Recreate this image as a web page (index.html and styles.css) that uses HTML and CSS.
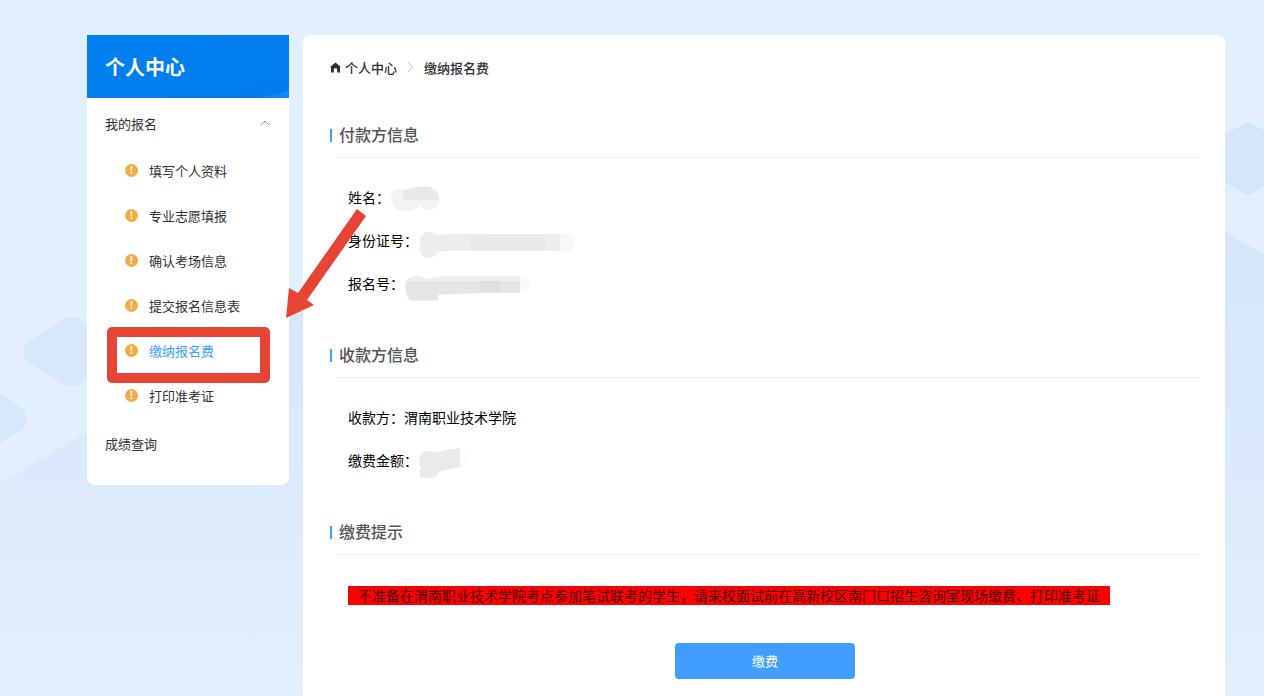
FILE: index.html
```html
<!DOCTYPE html>
<html lang="zh-CN">
<head>
  <meta charset="UTF-8">
  <meta name="viewport" content="width=device-width, initial-scale=1.0">
  <title>个人中心 - 缴纳报名费</title>
  <link rel="stylesheet" href="styles.css">
</head>
<body>
  <!-- 背景 -->
  <svg class="backdrop" viewBox="0 0 1264 696" preserveAspectRatio="xMidYMid slice" aria-hidden="true">
    <defs>
      <linearGradient id="fade" x1="0" y1="0" x2="0" y2="1">
        <stop offset="0" stop-color="#d5e6fb"/>
        <stop offset="0.5" stop-color="#dce9fc"/>
        <stop offset="1" stop-color="#e2effe"/>
      </linearGradient>
    </defs>
    <path fill="url(#fade)" d="M0 483 L90 430 L310 300 L1200 220 L1225 232 L1264 254 V696 H0 Z"/>
    <path fill="#d7e7fc" d="M26 343 L66 318 Q72 315 78 318 L118 343 V360 L78 385 Q72 388 66 385 L26 361 Q20 352 26 343 Z"/>
    <path fill="#d7e7fc" d="M0 394 L22 408 Q26 411 26 416 V422 Q26 426 22 429 L0 443 Z"/>
    <path fill="#d3e6fa" d="M1216 140 L1243 124 Q1248 121 1253 124 L1280 140 V177 L1253 193 Q1248 196 1243 193 L1216 177 Z"/>
  </svg>

  <div class="page">
    <!-- 左侧菜单 -->
    <aside class="sidebar">
      <h1 class="sidebar-title">个人中心</h1>
      <nav class="menu">
        <button type="button" class="menu-row" aria-expanded="true">
          我的报名
          <svg width="10" height="6" viewBox="0 0 10 6"><path d="M1 5 L5 1 L9 5" fill="none" stroke="#999" stroke-width="1"/></svg>
        </button>
        <ul class="submenu">
          <li><a href="#"><i class="warn">!</i>填写个人资料</a></li>
          <li><a href="#"><i class="warn">!</i>专业志愿填报</a></li>
          <li><a href="#"><i class="warn">!</i>确认考场信息</a></li>
          <li><a href="#"><i class="warn">!</i>提交报名信息表</a></li>
          <li class="marked"><a href="#" class="active"><i class="warn">!</i>缴纳报名费</a></li>
          <li><a href="#"><i class="warn">!</i>打印准考证</a></li>
        </ul>
        <a href="#" class="menu-row">成绩查询</a>
      </nav>
      <svg class="arrow" width="82" height="110" viewBox="0 0 82 110" aria-hidden="true">
        <path fill="#e64535" d="M72 0 L81 7 L22 91 L29 96 L1 109 L4 79 L13 84 Z"/>
      </svg>
    </aside>

    <!-- 缴费内容 -->
    <main class="content">
      <div class="breadcrumb">
        <svg width="11" height="11" viewBox="0 0 11 11"><path fill="#303133" d="M5.5 0.5 L11 5 H10 V10.5 H7.2 V7.5 Q7.2 6.3 5.5 6.3 Q3.8 6.3 3.8 7.5 V10.5 H1 V5 H0 Z"/></svg>
        <a href="#">个人中心</a>
        <svg class="sep" width="7" height="12" viewBox="0 0 7 12"><path d="M1 1 L6 6 L1 11" fill="none" stroke="#c0c4cc"/></svg>
        <span>缴纳报名费</span>
      </div>

      <section class="block">
        <h2 class="block-title"><span>付款方信息</span></h2>
        <div class="field">姓名：
          <svg width="54" height="30" viewBox="0 0 54 30">
            <path fill="#f3f3f3" d="M1 11 Q2 3 10 4 Q15 4 17 6 Q28 0 40 2 Q50 5 50 14 Q48 26 38 25 Q32 24 29 20 Q24 28 14 26 Q3 25 4 19 Q0 17 1 11 Z"/>
            <path fill="#e8e8e8" d="M13 6 Q28 0 40 2 Q48 5 49 15 H13 Z"/>
          </svg>
        </div>
        <div class="field">身份证号：
          <svg width="160" height="30" viewBox="0 0 160 30">
            <path fill="#f8f8f8" d="M136 6 H152 Q158 7 157 15 Q158 22 150 23 H136 Z"/>
            <path fill="#ededed" d="M2 13 Q3 4 11 4 Q16 4 19 7 Q40 5 70 6 H142 V23 H50 Q30 22 20 24 Q16 31 9 30 Q1 28 2 20 Z"/>
            <path fill="#e9e9e9" d="M52 7 H128 V22 H52 Z"/>
          </svg>
        </div>
        <div class="field">报名号：
          <svg width="132" height="30" viewBox="0 0 132 30">
            <path fill="#fafafa" d="M110 6 H121 Q128 9 126 16 Q124 21 110 22 Z"/>
            <path fill="#eeeeee" d="M1 15 Q2 6 11 5 Q18 5 22 8 Q40 4 60 5 H116 V22 H80 L34 24 V30 H6 Q1 26 1 15 Z"/>
            <path fill="#e6e6e6" d="M2 10 H116 V22 H80 L34 23 V29 H6 Q1 22 2 10 Z"/>
            <path fill="#e0e0e0" d="M76 10 H96 V20 H76 Z"/>
          </svg>
        </div>
      </section>

      <section class="block">
        <h2 class="block-title"><span>收款方信息</span></h2>
        <div class="field">收款方：渭南职业技术学院</div>
        <div class="field">缴费金额：
          <svg width="54" height="30" viewBox="0 0 54 30">
            <path fill="#fcfcfc" d="M38 3 Q50 2 49 12 Q48 20 38 20 Z"/>
            <path fill="#ebebeb" d="M1 12 Q2 2 11 3 L20 4 Q30 1 42 0 V19 Q30 21 21 24 Q18 30 12 30 H3 Q0 25 3 20 Q0 17 1 12 Z"/>
          </svg>
        </div>
      </section>

      <section class="block">
        <h2 class="block-title"><span>缴费提示</span></h2>
        <div class="field"><span class="notice">不准备在渭南职业技术学院考点参加笔试联考的学生，请来校面试前在高新校区南门口招生咨询室现场缴费、打印准考证</span></div>
      </section>

      <button type="button" class="pay">缴费</button>
    </main>
  </div>
</body>
</html>
```
FILE: styles.css
```css
* {
  box-sizing: border-box;
}

body {
  margin: 0;
  background: #e2effd;
  color: #303133;
  font-family: "Noto Sans CJK SC", "Liberation Sans", sans-serif;
  font-size: 13px;
}

a {
  color: inherit;
  text-decoration: none;
}

.backdrop {
  position: absolute;
  top: 0;
  left: 0;
  z-index: -1;
  width: 100%;
  height: 100%;
}

.page {
  display: flex;
  gap: 14px;
  min-height: 100vh;
  padding: 35px 39px 0 87px;
}

/* 左侧菜单 */
.sidebar {
  position: relative;
  flex: 0 0 202px;
  align-self: flex-start;
  background: #fff;
  border-radius: 0 0 8px 8px;
}

.sidebar-title {
  margin: 0;
  padding-left: 18px;
  background: linear-gradient(165deg, #0080ee 0%, #007cee 93%, #0e8af2 94%, #0e88f0 100%);
  color: #fff;
  font-size: 20px;
  line-height: 63px;
}

.menu {
  padding: 1px 0 16px;
}

.menu-row {
  display: flex;
  align-items: center;
  justify-content: space-between;
  width: 100%;
  height: 50px;
  padding: 0 19px 2px 18px;
  border: 0;
  background: none;
  color: #303133;
  font-family: inherit;
  font-size: 13px;
  cursor: pointer;
}

.submenu {
  margin: 0;
  padding: 0;
  list-style: none;
}

.submenu a {
  display: flex;
  align-items: center;
  gap: 11px;
  height: 45px;
  padding: 0 0 2px 38px;
}

.submenu .active {
  color: #409eff;
}

.warn {
  width: 13px;
  height: 13px;
  border-radius: 50%;
  background: #f3ab46;
  color: #fff;
  font: bold 10px/13px "Liberation Sans", sans-serif;
  text-align: center;
}

/* 红框和箭头标注 */
.marked {
  position: relative;
}

.marked::after {
  content: "";
  position: absolute;
  top: -2px;
  right: 19px;
  bottom: -9px;
  left: 20px;
  border: 10px solid #e64535;
  border-radius: 5px;
  pointer-events: none;
}

.arrow {
  position: absolute;
  top: 174px;
  left: 198px;
  z-index: 1;
  pointer-events: none;
}

/* 右侧内容 */
.content {
  flex: 1;
  min-width: 0;
  padding: 20px 25px 16px 27px;
  background: #fff;
  border-radius: 8px 8px 0 0;
}

.breadcrumb {
  display: flex;
  align-items: center;
  gap: 4px;
  height: 24px;
  margin-bottom: 33px;
  font-weight: 500;
}

.breadcrumb .sep {
  margin: 0 6px;
}

.block {
  margin-bottom: 26px;
}

.block-title {
  display: flex;
  align-items: center;
  height: 46px;
  margin: 0 0 19px;
  color: #555;
  font-size: 16px;
  font-weight: 500;
  line-height: 45px;
}

.block-title::before {
  content: "";
  width: 2px;
  height: 13px;
  margin-right: 4px;
  background: #409eff;
}

.block-title span {
  flex: 1;
  padding-left: 3px;
  border-bottom: 1px solid #f2f2f2;
}

.field {
  display: flex;
  align-items: center;
  min-height: 43px;
  padding: 0 0 3px 18px;
  color: #000;
  font-size: 14px;
}

.field svg {
  margin-top: 5px;
}

.notice {
  margin-top: 3px;
  padding: 0 10px;
  background: #f00;
  color: #400;
  line-height: 19px;
}

.pay {
  display: block;
  width: 180px;
  height: 36px;
  margin: 0 auto;
  padding: 0 0 2px;
  border: 0;
  border-radius: 4px;
  background: #409eff;
  color: #fff;
  font-family: inherit;
  font-size: 13px;
  cursor: pointer;
}
```
